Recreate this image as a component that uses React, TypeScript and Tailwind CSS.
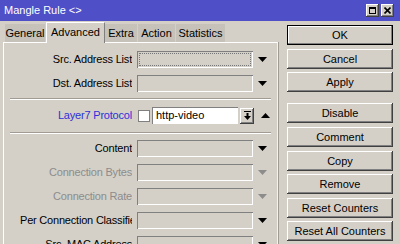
import * as React from 'react';

const raised = 'shadow-[inset_-1px_-1px_#404040,inset_1px_1px_#ffffff,inset_-2px_-2px_#808080]';
const sunken = 'shadow-[inset_1px_1px_#808080,inset_-1px_-1px_#ffffff]';

const Arrow: React.FC<{ up?: boolean; dim?: boolean }> = ({ up, dim }) => (
  <div className="w-[18px] flex justify-center">
    <svg width="9" height="5" viewBox="0 0 9 5">
      <polygon points={up ? '0,5 9,5 4.5,0' : '0,0 9,0 4.5,5'} fill={dim ? '#8c8c8c' : '#000'} />
    </svg>
  </div>
);

const Label: React.FC<{ text: string; tone?: string; pad?: string }> = ({ text, tone = 'text-black', pad = '' }) => (
  <div className={`w-[128px] overflow-hidden whitespace-nowrap text-right tracking-[-0.2px] ${pad} ${tone}`}>{text}</div>
);

const FieldRow: React.FC<{ label: string; pad?: string; tone?: string; dim?: boolean; focus?: boolean; mt: string }> = ({ label, pad, tone, dim, focus, mt }) => (
  <div className={`flex items-center h-[17px] ${mt}`}>
    <Label text={label} tone={tone} pad={pad} />
    <div className={`ml-[5px] w-[116px] h-[17px] bg-[#d4d0c8] ${sunken} p-[2px]`}>
      {focus && <div className="w-full h-full border border-dotted border-[#777]" />}
    </div>
    <Arrow dim={dim} />
  </div>
);

const Btn: React.FC<{ label: string; mt: string; def?: boolean }> = ({ label, mt, def }) => (
  <div
    className={`h-[20px] w-[106px] flex items-center justify-center text-black ${mt} ${
      def ? 'border border-black shadow-[inset_-1px_-1px_#808080,inset_1px_1px_#ffffff]' : raised
    }`}
  >
    {label}
  </div>
);

const Sep: React.FC<{ mt: string }> = ({ mt }) => (
  <div className={`${mt} mx-[6px] border-t border-t-[#a09c94] border-b border-b-white`} />
);

export default function App() {
  const tabs = [
    { name: 'General', w: 'w-[41px]' },
    { name: 'Advanced', w: 'w-[59px]', active: true },
    { name: 'Extra', w: 'w-[33px]' },
    { name: 'Action', w: 'w-[38px]' },
    { name: 'Statistics', w: 'w-[50px]' },
  ];

  return (
    <div className="w-[400px] h-[244px] overflow-hidden bg-[#d4d0c8] text-[11px] leading-none font-['Liberation_Sans',Arial,sans-serif] flex flex-col">
      <div className="h-[21px] shrink-0 bg-[#4f4fc8] flex items-center pl-[4px] pr-[6px]">
        <span className="text-white text-[11px]">Mangle Rule &lt;&gt;</span>
        <div className="ml-auto flex gap-[2px]">
          <div className={`w-[13px] h-[13px] bg-[#d4d0c8] ${raised} flex items-center justify-center`}>
            <div className="w-[7px] h-[7px] border border-black border-t-2" />
          </div>
          <div className={`w-[13px] h-[13px] bg-[#d4d0c8] ${raised} flex items-center justify-center`}>
            <svg width="7" height="7" viewBox="0 0 7 7">
              <path d="M0.5 0.5 L6.5 6.5 M6.5 0.5 L0.5 6.5" stroke="#000" strokeWidth="1.6" />
            </svg>
          </div>
        </div>
      </div>

      <div className="flex flex-1">
        <div className="w-[287px] flex flex-col">
          <div className="h-[21px] flex items-end pl-[5px]">
            {tabs.map((t) =>
              t.active ? (
                <div
                  key={t.name}
                  className={`${t.w} h-[21px] bg-[#d4d0c8] border-t border-l border-white border-r border-r-[#808080] flex items-start justify-center pt-[4px] relative z-10 -mb-px`}
                >
                  {t.name}
                </div>
              ) : (
                <div
                  key={t.name}
                  className={`${t.w} h-[18px] bg-[#c6c2ba] border-r border-[#d4d0c8] flex items-center justify-center text-black`}
                >
                  {t.name}
                </div>
              )
            )}
          </div>
          <div className="ml-[3px] w-[275px] flex-1 border-t border-l border-white border-r border-r-[#f4f2ee] shadow-[1px_0_#a09c94]">
            <FieldRow label="Src. Address List" mt="mt-[8px]" focus />
            <FieldRow label="Dst. Address List" mt="mt-[7px]" />
            <Sep mt="mt-[6px]" />
            <div className="flex items-center h-[17px] mt-[7px]">
              <Label text="Layer7 Protocol" tone="text-[#2f2fd8]" />
              <div className="ml-[6px] w-[12px] h-[12px] bg-white border border-[#808080]" />
              <div className={`ml-[2px] w-[86px] h-[17px] bg-white ${sunken} flex items-center pl-[4px] text-black`}>http-video</div>
              <div className={`ml-[2px] w-[14px] h-[16px] ${raised} flex items-center justify-center`}>
                <svg width="7" height="9" viewBox="0 0 7 9">
                  <rect x="0" y="0" width="7" height="1" fill="#000" />
                  <rect x="2.5" y="2" width="2" height="3" fill="#000" />
                  <polygon points="0,5 7,5 3.5,9" fill="#000" />
                </svg>
              </div>
              <div className="ml-[2px]">
                <Arrow up />
              </div>
            </div>
            <Sep mt="mt-[8px]" />
            <FieldRow label="Content" mt="mt-[6px]" />
            <FieldRow label="Connection Bytes" mt="mt-[7px]" tone="text-[#8c8c8c]" dim />
            <FieldRow label="Connection Rate" mt="mt-[7px]" tone="text-[#8c8c8c]" dim />
            <FieldRow label="Per Connection Classifier" pad="pl-[16px]" mt="mt-[7px]" />
            <FieldRow label="Src. MAC Address" mt="mt-[7px]" />
          </div>
        </div>

        <div className="flex flex-col pt-[4px]">
          <Btn label="OK" mt="mt-0" def />
          <Btn label="Cancel" mt="mt-[4px]" />
          <Btn label="Apply" mt="mt-[3px]" />
          <Btn label="Disable" mt="mt-[11px]" />
          <Btn label="Comment" mt="mt-[4px]" />
          <Btn label="Copy" mt="mt-[4px]" />
          <Btn label="Remove" mt="mt-[3px]" />
          <Btn label="Reset Counters" mt="mt-[4px]" />
          <Btn label="Reset All Counters" mt="mt-[3px]" />
        </div>
      </div>
    </div>
  );
}
